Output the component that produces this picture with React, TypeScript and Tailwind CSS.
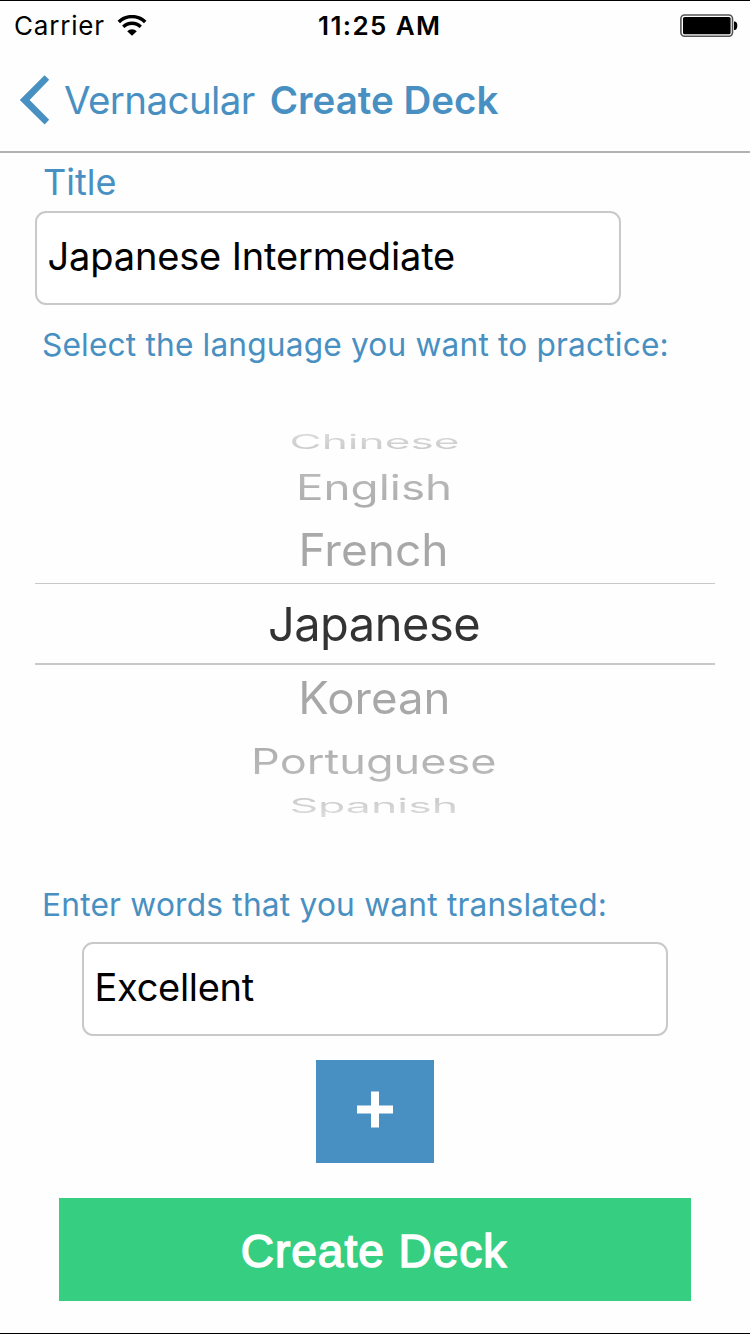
import React from "react";

function WifiIcon() {
  return (
    <svg className="ml-[12px] h-[22px] w-[30px]" viewBox="0 0 30 22" fill="none">
      <path d="M1.8 7.1 A18.6 18.6 0 0 1 28.2 7.1" stroke="#000" strokeWidth="3.5" />
      <path d="M6.3 11.9 A12.2 12.2 0 0 1 23.7 11.9" stroke="#000" strokeWidth="3.4" />
      <path d="M15 20.8 L10.2 16.2 A6.8 6.8 0 0 1 19.8 16.2 Z" fill="#000" />
    </svg>
  );
}

function BatteryIcon() {
  return (
    <svg className="h-[24px] w-[58px]" viewBox="0 0 58 24">
      <rect x="0.9" y="1" width="51.6" height="21.2" rx="3.6" fill="#fff" stroke="#555" strokeWidth="1.6" />
      <rect x="3" y="3" width="47.6" height="17.3" rx="1.6" fill="#000" />
      <path d="M54 7.6 h1 q2.3 0.6 2.3 4.2 t-2.3 4.2 h-1 z" fill="#000" />
    </svg>
  );
}

function StatusBar() {
  return (
    <div className="grid h-[49px] grid-cols-3 items-center pr-[12.5px] pl-[14px] text-[26px] leading-[49px] text-black">
      <div className="flex items-center">
        <span className="tracking-[0.8px]">Carrier</span>
        <WifiIcon />
      </div>
      <div className="pl-[8px] text-center font-semibold tracking-[1.4px] whitespace-nowrap">11:25 AM</div>
      <div className="flex justify-end">
        <BatteryIcon />
      </div>
    </div>
  );
}

function NavBar() {
  return (
    <nav className="flex h-[101px] items-center pl-[19px] text-[38.5px] leading-[101px]">
      <svg className="mb-[2px] h-[50px] w-[31px]" viewBox="0 0 31 50" fill="#4990c2">
        <path d="M25.6 0.2 L30.2 4.8 L10.6 25 L30.2 44.8 L25.6 49.4 L0.8 25 Z" />
      </svg>
      <span className="ml-[14px] tracking-[-0.6px] whitespace-nowrap">Vernacular</span>
      <span className="ml-[15px] font-semibold whitespace-nowrap">Create Deck</span>
    </nav>
  );
}

function TextBox({ value, className }: { value: string; className: string }) {
  return (
    <div
      className={`h-[94px] w-[586px] rounded-[11px] border-2 border-[#c9c9c9] bg-white pl-[10.5px] text-[38px] leading-[87px] whitespace-nowrap text-black ${className}`}
    >
      {value}
    </div>
  );
}

const rows = [
  { name: "Chinese", row: "h-[30px]", text: "scale-x-[0.94] scale-y-[0.43] from-[#dedede] to-[#c6c6c6]" },
  { name: "English", row: "h-[60px]", text: "scale-x-[0.975] scale-y-[0.74] from-[#bcbcbc] to-[#acacac]" },
  { name: "French", row: "h-[66px]", text: "scale-x-[0.98] scale-y-[0.945] from-[#aaaaaa] to-[#a4a4a4]" },
  {
    name: "Japanese",
    row: "h-[82px] border-t border-b-2 border-[#c8c8c8]",
    text: "tracking-[-0.5px] from-[#333333] to-[#333333]",
  },
  { name: "Korean", row: "h-[65px]", text: "scale-x-[0.97] scale-y-[0.945] from-[#a4a4a4] to-[#aaaaaa]" },
  { name: "Portuguese", row: "h-[61px]", text: "scale-x-[0.96] scale-y-[0.74] from-[#acacac] to-[#bcbcbc]" },
  { name: "Spanish", row: "h-[29px]", text: "scale-x-[0.95] scale-y-[0.43] from-[#c6c6c6] to-[#dedede]" },
];

function LanguagePicker() {
  return (
    <div className="mx-[35px] mt-[45px] flex flex-col text-[47px] leading-[60px]">
      {rows.map((r) => (
        <div key={r.name} className={`flex items-center justify-center pr-[2px] ${r.row}`}>
          <span className={`shrink-0 bg-linear-to-b bg-clip-text text-transparent ${r.text}`}>{r.name}</span>
        </div>
      ))}
    </div>
  );
}

export default function App() {
  return (
    <div className="flex h-[1334px] w-[750px] flex-col overflow-hidden border-y border-black bg-[#fefefe] font-['Inter',sans-serif] text-[#4990c2]">
      <header className="h-[152px] shrink-0 border-b-2 border-[#b2b2b2]">
        <StatusBar />
        <NavBar />
      </header>
      <div className="h-[58px] pl-[43px] text-[36px] leading-[59px]">Title</div>
      <TextBox value="Japanese Intermediate" className="ml-[35px] tracking-[-0.15px]" />
      <div className="h-[77px] pl-[42px] text-[31.7px] leading-[79px] tracking-[0.16px] whitespace-nowrap">
        Select the language you want to practice:
      </div>
      <LanguagePicker />
      <div className="mt-[45px] h-[77px] pl-[42px] text-[31.7px] leading-[79px] tracking-[0.2px] whitespace-nowrap">
        Enter words that you want translated:
      </div>
      <TextBox value="Excellent" className="ml-[82px] tracking-[-0.3px]" />
      <button className="mt-[24px] flex h-[103px] w-[118px] items-center justify-center self-center bg-[#4990c2]">
        <svg className="mb-[4px] h-[37px] w-[36px]" viewBox="0 0 36 37" fill="#fff">
          <path d="M14 0.5 h8 v14 h14 v8 h-14 v14 h-8 v-14 h-14 v-8 h14 z" />
        </svg>
      </button>
      <button className="mt-[35px] h-[103px] w-[632px] self-center bg-[#36cf81] pt-[3px] pr-[2px] font-['Liberation_Sans',Arial,sans-serif] text-[46px] leading-[100px] tracking-[1px] text-white [-webkit-text-stroke:1.5px_white]">
        Create Deck
      </button>
    </div>
  );
}
